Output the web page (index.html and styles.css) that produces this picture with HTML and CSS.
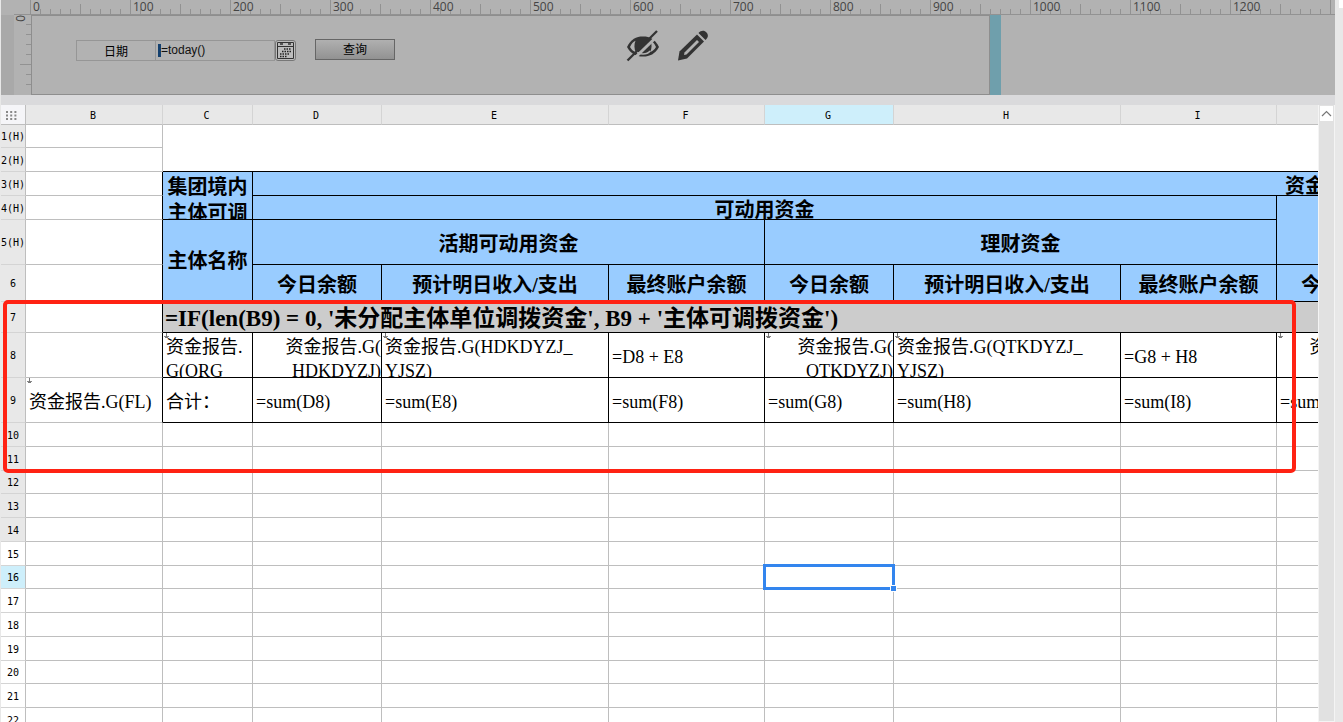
FILE: index.html
```html
<!DOCTYPE html>
<html lang="zh-CN">
<head>
<meta charset="utf-8">
<title>资金报告</title>
<link rel="stylesheet" href="styles.css">
</head>
<body>
<div class="app">
  <main class="workspace">
    <section class="param">
      <div class="ruler-top"><span>0</span><span>100</span><span>200</span><span>300</span><span>400</span><span>500</span><span>600</span><span>700</span><span>800</span><span>900</span><span>1000</span><span>1100</span><span>1200</span><span></span></div>
      <div class="param-body">
        <div class="ruler-left"><span>0</span></div>
        <form class="param-form">
          <div class="field">
            <label class="field-label" for="date">日期</label>
            <div class="field-input"><i class="mark"></i><input id="date" type="text" value="=today()"></div>
            <button class="cal" type="button" aria-label="选择日期">
              <svg width="17" height="17" viewBox="0 0 17 17"><path d="M.5 .5h16v16h-16zM1 4.500h15" stroke="#333" fill="none"/><path d="M3 2h3M11 2h3" stroke="#333" stroke-width="1.500"/><path d="M7 7h7M5 9.500h9M3 12h9M3 14.500h7" stroke="#222" stroke-width="1.500" stroke-dasharray="1.500 1" fill="none"/></svg>
            </button>
          </div>
          <button class="query" type="button">查询</button>
          <div class="tools">
            <button class="tool" type="button" aria-label="隐藏">
              <svg width="34" height="32" viewBox="0 0 34 32"><path d="M1 17C5 9 10 6.500 17 6.500S29 9 33 17C29 24 24 26.500 17 26.500S5 24 1 17Z" fill="#333"/><path d="M4 17C5.500 13.500 7 12 9.500 10.700C8 14 8 19 10 22.500C7 21 5.500 19.500 4 17ZM30 17C28.500 13.500 27 12 24.500 10.700C26 14 26 19 24 22C27 21 28.500 19.500 30 17Z" fill="#b2b2b2"/><path d="M10 21C13 25 21 25 24 21" stroke="#b2b2b2" stroke-width="1.500" fill="none"/><path d="M3.500 33L33 4.500" stroke="#b2b2b2" stroke-width="3"/><path d="M1.500 30.500L31 1" stroke="#333" stroke-width="2.300"/></svg>
            </button>
            <button class="tool" type="button" aria-label="编辑">
              <svg width="32" height="32" viewBox="0 0 32 32"><path d="M1 30.500L2.500 21.500L20 4.500L27 11.500L10 28.500Z" fill="#333"/><path d="M7.500 22.500L20 10L22 12L9.500 24.500L7 25Z" fill="#b2b2b2"/><path d="M21.500 3C24 .2 27.500 .2 29.500 2.500C31.500 4.700 31.500 7.500 28.500 10Z" fill="#333"/></svg>
            </button>
          </div>
        </form>
        <div class="grip"></div>
      </div>
    </section>
    <section class="sheet">
      <div class="pane">
        <table class="grid">
          <colgroup><col class="c-n"><col class="c-b"><col class="c-c"><col class="c-s"><col class="c-l"><col class="c-m"><col class="c-s"><col class="c-l"><col class="c-m"><col class="c-s"></colgroup>
          <thead><tr class="head"><th class="corner"><svg width="12" height="9" viewBox="0 0 12 9"><path d="M1 1h11M1 4.500h11M1 8h11" stroke="#888" stroke-width="2" stroke-dasharray="2 2.200"/></svg></th><th>B</th><th>C</th><th>D</th><th>E</th><th>F</th><th class="on">G</th><th>H</th><th>I</th><th></th></tr></thead>
          <tbody>
            <tr class="h23"><th>1(H)</th><td></td><td class="title" colspan="8" rowspan="2"></td></tr>
            <tr class="h24"><th>2(H)</th><td></td></tr>
            <tr class="h24"><th>3(H)</th><td class="edge"></td><td class="blue" rowspan="2"><div class="two">集团境内<br>主体可调</div></td><td class="blue far" colspan="7"><div class="one">资金</div></td></tr>
            <tr class="h24"><th>4(H)</th><td class="edge"></td><td class="blue" colspan="6"><div class="one">可动用资金</div></td><td class="blue" rowspan="2"></td></tr>
            <tr class="h45"><th>5(H)</th><td class="edge"></td><td class="blue" rowspan="2">主体名称</td><td class="blue low" colspan="3">活期可动用资金</td><td class="blue low" colspan="3">理财资金</td></tr>
            <tr class="h37"><th>6</th><td class="edge"></td><td class="blue low">今日余额</td><td class="blue low">预计明日收入/支出</td><td class="blue low">最终账户余额</td><td class="blue low">今日余额</td><td class="blue low">预计明日收入/支出</td><td class="blue low">最终账户余额</td><td class="blue low">今日余额</td></tr>
            <tr class="h31"><th>7</th><td class="edge"></td><td class="group" colspan="8"><div class="formula">=IF(len(B9) = 0, '未分配主体单位调拨资金', B9 + '主体可调拨资金')</div></td></tr>
            <tr class="h45"><th>8</th><td class="edge"></td><td class="data down"><div class="wrap">资金报告.<br>G(ORG</div></td><td class="data"><div class="wrap right">资金报告.G(<br>HDKDYZJ)</div></td><td class="data down"><div class="wrap">资金报告.G(HDKDYZJ_<br>YJSZ)</div></td><td class="data low">=D8 + E8</td><td class="data down"><div class="wrap right">资金报告.G(<br>QTKDYZJ)</div></td><td class="data down"><div class="wrap">资金报告.G(QTKDYZJ_<br>YJSZ)</div></td><td class="data low">=G8 + H8</td><td class="data down"><div class="wrap right">资金报告.G(</div></td></tr>
            <tr class="h45"><th>9</th><td class="edge free down low">资金报告.G(FL)</td><td class="data low">合计：</td><td class="data low">=sum(D8)</td><td class="data low">=sum(E8)</td><td class="data low">=sum(F8)</td><td class="data low">=sum(G8)</td><td class="data low">=sum(H8)</td><td class="data low">=sum(I8)</td><td class="data low">=sum(J8)</td></tr>
            <tr class="h24"><th>10</th><td></td><td></td><td></td><td></td><td></td><td></td><td></td><td></td><td></td></tr>
            <tr class="h24"><th>11</th><td></td><td></td><td></td><td></td><td></td><td></td><td></td><td></td><td></td></tr>
            <tr class="h23"><th>12</th><td></td><td></td><td></td><td></td><td></td><td></td><td></td><td></td><td></td></tr>
            <tr class="h24"><th>13</th><td></td><td></td><td></td><td></td><td></td><td></td><td></td><td></td><td></td></tr>
            <tr class="h24"><th>14</th><td></td><td></td><td></td><td></td><td></td><td></td><td></td><td></td><td></td></tr>
            <tr class="h24 plain"><th>15</th><td></td><td></td><td></td><td></td><td></td><td></td><td></td><td></td><td></td></tr>
            <tr class="h23"><th class="on">16</th><td></td><td></td><td></td><td></td><td></td><td class="picked"><div class="selection"></div></td><td></td><td></td><td></td></tr>
            <tr class="h24 plain"><th>17</th><td></td><td></td><td></td><td></td><td></td><td></td><td></td><td></td><td></td></tr>
            <tr class="h24 plain"><th>18</th><td></td><td></td><td></td><td></td><td></td><td></td><td></td><td></td><td></td></tr>
            <tr class="h24 plain"><th>19</th><td></td><td></td><td></td><td></td><td></td><td></td><td></td><td></td><td></td></tr>
            <tr class="h23 plain"><th>20</th><td></td><td></td><td></td><td></td><td></td><td></td><td></td><td></td><td></td></tr>
            <tr class="h24 plain"><th>21</th><td></td><td></td><td></td><td></td><td></td><td></td><td></td><td></td><td></td></tr>
            <tr class="h24 plain"><th>22</th><td></td><td></td><td></td><td></td><td></td><td></td><td></td><td></td><td></td></tr>
          </tbody>
        </table>
        <div class="highlight"></div>
      </div>
      <div class="scroll"><button type="button" aria-label="向上滚动"><svg width="11" height="7" viewBox="0 0 11 7"><path d="M1 6L5.500 1.500L10 6" fill="none" stroke="#777" stroke-width="1.200"/></svg></button></div>
    </section>
  </main>
  <aside class="side"><div class="side-tab"></div></aside>
</div>
</body>
</html>
```
FILE: styles.css
```css
* { box-sizing: border-box; }
body {
  margin: 0;
  background: #fff;
  color: #000;
  font-family: "Liberation Sans", "Noto Sans CJK SC", sans-serif;
}
button { padding: 0; font: inherit; color: inherit; }
svg { display: block; }
.app { display: flex; height: 100vh; overflow: hidden; border-left: 1px solid #e8e8e8; }
.workspace { flex: 1; min-width: 0; display: flex; flex-direction: column; }
.side { width: 8px; background: #e8e8e8; display: flex; justify-content: flex-end; }
.side-tab { width: 4px; height: 8px; background: #fff; }

/* parameter pane */
.param { background: #b2b2b2; border-bottom: 10px solid #dadadc; }
.ruler-top {
  display: flex;
  height: 15px;
  margin-left: 13px;
  padding-left: 16px;
  overflow-x: clip;
  overflow-y: visible;
  border-bottom: 1px solid #929292;
  background:
    repeating-linear-gradient(90deg, #929292 0 1px, transparent 1px 100px) 16px 0 / 100% 14px no-repeat,
    repeating-linear-gradient(90deg, #929292 0 1px, transparent 1px 50px) 16px 4px / 100% 10px no-repeat,
    repeating-linear-gradient(90deg, #929292 0 1px, transparent 1px 10px) 16px 9px / 100% 5px no-repeat;
}
.ruler-top span {
  flex: none;
  width: 100px;
  padding-left: 3px;
  font: 12px/14px "Open Sans", sans-serif;
  color: #444;
}
.param-body { display: flex; height: 80px; }
.ruler-left {
  width: 30px;
  border-left: 13px solid #a9a9a9;
  font: 12px/14px "Open Sans", sans-serif;
  color: #444;
  background:
    repeating-linear-gradient(#929292 0 1px, transparent 1px 50px) 6px -1px / 10px 100% no-repeat,
    repeating-linear-gradient(#929292 0 1px, transparent 1px 10px) 12px -1px / 5px 100% no-repeat;
}
.ruler-left span { display: block; writing-mode: vertical-rl; line-height: 12px; }
.param-form {
  width: 959px;
  display: flex;
  align-items: flex-start;
  padding: 14px 0 0 44px;
  border: 1px solid #8e8e8e;
}
.field { display: flex; height: 21px; margin-top: 10px; }
.field-label {
  width: 80px;
  padding-top: 1px;
  border: 1px solid #969696;
  font-size: 12px;
  line-height: 20px;
  text-align: center;
}
.field-input {
  display: flex;
  align-items: center;
  width: 119px;
  padding-left: 2px;
  border: 1px solid #969696;
  border-left: 0;
}
.mark { width: 3px; height: 13px; background: #14406e; }
.field-input input {
  width: 100px;
  padding: 0;
  border: 0;
  background: none;
  font: 12px/17px "Liberation Sans", sans-serif;
  color: #111;
}
.cal {
  display: grid;
  place-items: center;
  width: 21px;
  border: 1px solid #777;
  border-radius: 3px;
  background: #bcbcbc;
}
.query {
  width: 80px;
  height: 21px;
  margin: 9px 0 0 19px;
  border: 1px solid #666;
  background: linear-gradient(#b0b0b0, #929292);
  font-size: 12px;
  line-height: 18px;
}
.tools { display: flex; gap: 17px; margin-left: 231px; }
.tool { border: 0; background: none; }
.grip { width: 11px; background: #6f9fac; }

/* sheet */
.sheet { flex: 1; min-height: 0; display: flex; }
.pane { position: relative; flex: 1; min-width: 0; overflow: hidden; background: #fff; }
.grid { table-layout: fixed; border-collapse: separate; border-spacing: 0; width: 1404px; }
.c-n { width: 25px; }
.c-b { width: 137px; }
.c-c { width: 90px; }
.c-s { width: 129px; }
.c-l { width: 227px; }
.c-m { width: 156px; }
.h23 { height: 23px; }
.h24 { height: 24px; }
.h31 { height: 31px; }
.h37 { height: 37px; }
.h45 { height: 45px; }
th, td { padding: 0; white-space: nowrap; }
th {
  padding-top: 2px;
  border-right: 1px solid #bebebe;
  border-bottom: 1px solid #d4d4d4;
  background: #e8e8e8;
  font: 10px/12px "DejaVu Sans Mono", monospace;
}
.head { height: 20px; }
.head th { padding: 2px 2px 0 0; border-right-color: #d4d4d4; border-bottom-color: #bebebe; }
.head .corner { background: #f5f5f8; border-right-color: #bebebe; padding-left: 4px; }
.plain th { background: #fff; }
.head .on, th.on { background: #ceeffb; }
td { border-right: 1px solid #bebebe; border-bottom: 1px solid #bebebe; }
.title, .blue, .group, .data { border-color: #000; }
.edge { border-right-color: #000; }
.blue {
  background: #99ccff;
  text-align: center;
  font: bold 20px/24px "Liberation Serif", "Noto Sans CJK SC", serif;
}
.far { text-align: right; padding-right: 80px; }
.one { height: 23px; line-height: 28px; }
.two { height: 47px; padding-top: 2px; line-height: 26px; overflow: hidden; }
.group {
  padding-left: 2px;
  background: #ccc;
  font: bold 23px/30px "Liberation Serif", "Noto Sans CJK SC", serif;
}
.formula { height: 30px; line-height: 34px; }
.data, .free { padding-left: 3px; font: 18px/24px "Liberation Serif", "Noto Sans CJK SC", serif; }
.low { padding-top: 3px; }
.wrap { height: 44px; padding-top: 2px; overflow: hidden; }
.right { text-align: right; }
.down {
  background: linear-gradient(#777, #777) 3px 0 / 1px 5px no-repeat,
    linear-gradient(#888, #888) 1px 3px / 5px 1px no-repeat,
    linear-gradient(#777, #777) 2px 4px / 3px 1px no-repeat;
}
.picked { position: relative; }
.selection { position: absolute; inset: -2px; border: 3px solid #3385ee; }
.selection::after {
  content: "";
  position: absolute;
  right: -4px;
  bottom: -4px;
  width: 5px;
  height: 5px;
  background: #3385ee;
  outline: 1px solid #fff;
}
.highlight {
  position: absolute;
  left: 2px;
  top: 195px;
  width: 1293px;
  height: 173px;
  border: 4px solid #ff2213;
  border-radius: 5px;
}
.scroll { width: 17px; padding: 1px; background: #e1e1e1; border: 1px solid #f4f4f4; border-top: 0; }
.scroll button { display: grid; place-items: center; width: 100%; height: 15px; border: 0; background: #fff; }
```
